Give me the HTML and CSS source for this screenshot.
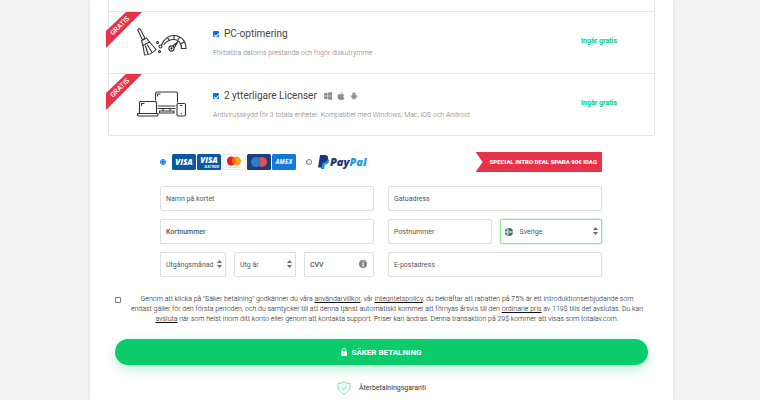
FILE: index.html
```html
<!DOCTYPE html>
<html lang="sv">
<head>
    <meta charset="UTF-8">
    <meta name="viewport" content="width=device-width, initial-scale=1.0">
    <title>Säker betalning</title>
    <link rel="stylesheet" href="styles.css">
</head>
<body>
    <main class="checkout">
        <div class="offers">
            <div class="offer">
                <svg class="ribbon" viewBox="0 0 36 36">
                    <polygon points="20,0 36,0 0,36 0,19" fill="#e63349"/>
                    <text x="14" y="16" transform="rotate(-45 14 14)" text-anchor="middle">GRATIS</text>
                </svg>
                <div class="offer-icon">
                    <svg width="50" height="28" viewBox="0 0 50 28" fill="none" stroke="#333" stroke-width="1.1" stroke-linecap="round" stroke-linejoin="round">
                        <path d="M1 2.5C.5 1 2.500 0 3.500 1.500L8 10.500 5.500 12Z"/>
                        <path d="M4.500 12.500L9.500 10 12.500 14 6 17.500Z"/>
                        <path d="M6 17.500L7.500 27Q14 27 19 21.500L12.500 14M8.500 18L11 26M10.500 17L15 24.500"/>
                        <circle cx="20.500" cy="14.500" r="1"/>
                        <circle cx="23.500" cy="18.500" r="1.500"/>
                        <circle cx="22.500" cy="23.500" r="1"/>
                        <path d="M24.500 17C28 9 33 7.500 37 7.500 44 7.500 49 13 49 20.500H44.500C44.500 15 41 11.500 37 11.500 33 11.500 30 12.500 27 16.500"/>
                        <path d="M30.500 9.500L32.500 12.500M37 7.500V11.500M42.500 9.500L40.500 12.500M47 14L43.500 16"/>
                        <circle cx="34.500" cy="20.500" r="2.600"/>
                        <circle cx="34.500" cy="20.500" r=".6"/>
                        <path d="M36 18L41 13.500 37.500 19.500"/>
                    </svg>
                </div>
                <div class="offer-text">
                    <label class="offer-title"><input type="checkbox" checked> PC-optimering</label>
                    <p>Förbättra datorns prestanda och frigör diskutrymme</p>
                </div>
                <strong class="offer-price">Ingår gratis</strong>
            </div>
            <div class="offer">
                <svg class="ribbon" viewBox="0 0 36 36">
                    <polygon points="20,0 36,0 0,36 0,19" fill="#e63349"/>
                    <text x="14" y="16" transform="rotate(-45 14 14)" text-anchor="middle">GRATIS</text>
                </svg>
                <div class="offer-icon">
                    <svg width="50" height="26" viewBox="0 0 50 26" fill="none" stroke="#333" stroke-width="1.1" stroke-linecap="round" stroke-linejoin="round">
                        <path d="M18.500 9V2.500Q18.500 1 20 1H39Q40.500 1 40.500 2.500V11M21 15H38M21 17.500H38M26 17.500V20M33 17.500V20M22.500 20H37V22H22.500ZM20.500 5V3H23"/>
                        <path d="M2.500 22V11.500Q2.500 10.500 3.500 10.500H18.500Q19.500 10.500 19.500 11.500V22M4.500 14.500V12.500H7"/>
                        <path d="M.600 22.500H21V24Q21 25 20 25H2Q.600 25 .600 24Z"/>
                        <rect x="40" y="12.500" width="8.500" height="12.500" rx="1.200"/>
                        <path d="M43.500 14.500H45M44.200 22.500V23"/>
                    </svg>
                </div>
                <div class="offer-text">
                    <div class="title-row">
                        <label class="offer-title"><input type="checkbox" checked> 2 ytterligare Licenser</label>
                        <span class="platforms">
                            <svg width="8" height="8" viewBox="0 0 16 16" fill="#8e8e8e"><path d="M0 2.300L6.500 1.400V7.600H0ZM7.300 1.300L16 0V7.600H7.300ZM0 8.400H6.500V14.600L0 13.700ZM7.300 8.400H16V16L7.300 14.700Z"/></svg>
                            <svg width="8" height="8" viewBox="0 0 16 16" fill="#8e8e8e"><path d="M11 0C11 2.200 9.500 3.800 7.700 3.800 7.600 1.800 9.200.2 11 0ZM11 4.200C12.500 4.200 13.700 5 14.400 6 11.500 7.700 12 11 15 12.200 14.200 14.200 12.800 16 11.400 16 10.200 16 9.800 15.300 8.300 15.300 6.800 15.300 6.400 16 5.200 16 3.300 16 1 12.500 1 9.200 1 6 3 4.200 5.200 4.200 6.600 4.200 7.500 5 8.300 5 9 5 10 4.200 11 4.200Z"/></svg>
                            <svg width="8" height="8" viewBox="0 0 16 16" fill="#8e8e8e"><path d="M4 5.500C4 3.800 5 2.600 6 2L5 .3 5.500 0 6.600 1.700Q8 1.200 9.400 1.700L10.500 0 11 .3 10 2C11 2.600 12 3.800 12 5.500ZM4 6.200H12V12.500H10.800V15.200Q10 16.500 9 15.200V12.500H7V15.200Q6 16.500 5.200 15.200V12.500H4ZM1.500 7Q2.400 5.500 3.300 7V11Q2.400 12.400 1.500 11ZM12.700 7Q13.600 5.500 14.500 7V11Q13.600 12.400 12.700 11Z"/></svg>
                        </span>
                    </div>
                    <p>Antivirusskydd för 3 totala enheter. Kompatibel med Windows, Mac, iOS och Android.</p>
                </div>
                <strong class="offer-price">Ingår gratis</strong>
            </div>
        </div>

        <form class="payment">
            <div class="methods">
                <label class="method">
                    <input type="radio" name="method" aria-label="Kort" checked>
                    <span class="cards">
                        <svg width="24" height="16" viewBox="0 0 24 16"><rect width="24" height="16" rx="1.500" fill="#0b57a0"/><text x="12" y="11" class="visa" text-anchor="middle">VISA</text></svg>
                        <svg width="24" height="16" viewBox="0 0 24 16"><rect width="24" height="16" rx="1.500" fill="#0b57a0"/><text x="12" y="9" class="visa" text-anchor="middle">VISA</text><text x="22" y="14" class="electron" text-anchor="end">ELECTRON</text></svg>
                        <svg width="24" height="16" viewBox="0 0 24 16"><rect x=".5" y=".5" width="23" height="15" rx="1.500" fill="#fff" stroke="#ececec"/><circle cx="9.300" cy="7" r="4.500" fill="#eb1b26"/><circle cx="14.500" cy="7" r="4.500" fill="#f99f1b"/><path d="M11.900 3.300A4.500 4.500 0 0 1 11.900 10.700 4.500 4.500 0 0 1 11.900 3.300Z" fill="#f26322"/><path d="M6.500 13.300H17.500" stroke="#999" stroke-width=".6" stroke-dasharray="1 .4"/></svg>
                        <svg width="24" height="16" viewBox="0 0 24 16"><rect width="24" height="16" rx="1.500" fill="#1d3f7c"/><circle cx="9" cy="8" r="5" fill="#2081d8"/><circle cx="15" cy="8" r="5" fill="#e2504f"/><path d="M12 4A5 5 0 0 1 12 12 5 5 0 0 1 12 4Z" fill="#68649c"/></svg>
                        <svg width="24" height="16" viewBox="0 0 24 16"><rect width="24" height="16" rx="1.500" fill="#1578d6"/><text x="12" y="10" class="amex" text-anchor="middle">AMEX</text></svg>
                    </span>
                </label>
                <label class="method">
                    <input type="radio" name="method" aria-label="PayPal">
                    <svg width="49" height="14" viewBox="0 0 49 14">
                        <path d="M4.500 3.500H9.500C11.500 4 11.300 6.500 10.300 8 9.500 9.300 8 9.500 6.800 9.500L6.200 14H3Z" fill="#1d9bd8"/>
                        <path d="M2 0H7C10 .1 10.500 2.200 9.800 4.200 9 6.700 7.200 7.500 4.600 7.500L3.700 12.500H0Z" fill="#1d3480"/>
                        <text x="12" y="11" class="paypal" fill="#1d3480">Pay<tspan fill="#1d9bd8">Pal</tspan></text>
                    </svg>
                </label>
                <span class="deal">SPECIAL INTRO DEAL SPARA 90€ IDAG</span>
            </div>

            <div class="fields">
                <input class="field" type="text" placeholder="Namn på kortet" aria-label="Namn på kortet">
                <input class="field" type="text" placeholder="Gatuadress" aria-label="Gatuadress">
                <input class="field strong" type="text" placeholder="Kortnummer" aria-label="Kortnummer">
                <div class="field-group address">
                    <input class="field" type="text" placeholder="Postnummer" aria-label="Postnummer">
                    <div class="select country">
                        <select class="field" aria-label="Land"><option>Sverige</option></select>
                        <svg class="flag" viewBox="0 0 8 8"><circle cx="4" cy="4" r="4" fill="#2b6fb5"/><path d="M2 .5H3.500V3.200H8V4.800H3.500V7.500H2V4.800H0V3.200H2Z" fill="#f6cf46"/></svg>
                        <svg class="arrows" viewBox="0 0 5 8"><path d="M0 3L2.500 0 5 3ZM0 5L2.500 8 5 5Z"/></svg>
                    </div>
                </div>
                <div class="field-group expiry">
                    <div class="select">
                        <select class="field" aria-label="Utgångsmånad"><option>Utgångsmånad</option></select>
                        <svg class="arrows" viewBox="0 0 5 8"><path d="M0 3L2.500 0 5 3ZM0 5L2.500 8 5 5Z"/></svg>
                    </div>
                    <div class="select">
                        <select class="field" aria-label="Utgångsår"><option>Utg år</option></select>
                        <svg class="arrows" viewBox="0 0 5 8"><path d="M0 3L2.500 0 5 3ZM0 5L2.500 8 5 5Z"/></svg>
                    </div>
                    <div class="select">
                        <input class="field strong" type="text" placeholder="CVV" aria-label="CVV">
                        <svg class="info" viewBox="0 0 8 8"><circle cx="4" cy="4" r="4" fill="#858585"/><path d="M4.500 1.300V2.300M3.300 3.500H4.300L3.800 6.300H4.700" fill="none" stroke="#fff"/></svg>
                    </div>
                </div>
                <input class="field" type="email" placeholder="E-postadress" aria-label="E-postadress">
            </div>

            <div class="terms">
                <input type="checkbox" id="accept">
                <label for="accept">Genom att klicka på "Säker betalning" godkänner du våra <a href="#">användarvillkor</a>, vår <a href="#">integritetspolicy</a>, du bekräftar att rabatten på 75% är ett introduktionserbjudande som<br>
                endast gäller för den första perioden, och du samtycker till att denna tjänst automatiskt kommer att förnyas årsvis till den <a href="#">ordinarie pris</a> av 119$ tills det avslutas. Du kan<br>
                <a href="#">avsluta</a> när som helst inom ditt konto eller genom att kontakta support. Priser kan ändras. Denna transaktion på 29$ kommer att visas som totalav.com.</label>
            </div>

            <button class="pay" type="submit">
                <svg width="6" height="8" viewBox="0 0 6 8"><rect y="3" width="6" height="5" rx=".8" fill="#fff"/><path d="M1.200 3.500V2.300A1.800 1.800 0 0 1 4.800 2.300V3.500" fill="none" stroke="#fff"/><path d="M3 5V6.300" stroke="#0ccb6b"/></svg>
                SÄKER BETALNING
            </button>
        </form>

        <div class="guarantee">
            <svg width="14" height="14" viewBox="0 0 14 14" fill="none" stroke="#5fdc9c" stroke-width=".8" stroke-linejoin="round">
                <path d="M7 .8Q9.500 2.600 13 2.500C13.400 8 11 11.500 7 13.200 3 11.500.600 8 1 2.500Q4.500 2.600 7 .8Z"/>
                <path d="M7 3Q9 4.100 11 4.200C11 7.500 9.500 9.700 7 11 4.500 9.700 3 7.500 3 4.200Q5 4.100 7 3Z" fill="#e8faf1" stroke="none"/>
                <path d="M4.800 7.200L6.300 8.600 9.300 5.600"/>
            </svg>
            Återbetalningsgaranti
        </div>
    </main>
</body>
</html>
```

FILE: styles.css
```css
* {
    box-sizing: border-box;
}
body {
    margin: 0;
    padding: 0 87px 0 90px;
    background: #f2f2f2;
    color: #444;
    font-family: Roboto, sans-serif;
    font-size: 7px;
}
input, select, button {
    font-family: inherit;
    margin: 0;
}
.checkout {
    min-height: 100vh;
    padding: 0 18px;
    background: #fff;
    box-shadow: 0 0 3px rgba(0, 0, 0, 0.1);
}

/* offers */
.offers {
    padding-top: 11px;
    border: 1px solid #e6e6e6;
    border-top: none;
    border-radius: 0 0 2px 2px;
}
.offer {
    position: relative;
    display: grid;
    grid-template-columns: 104px 1fr 73px;
    align-items: center;
    height: 62px;
    border-top: 1px solid #e6e6e6;
}
.ribbon {
    position: absolute;
    top: 0;
    left: -3px;
    width: 36px;
    height: 36px;
}
.ribbon text {
    fill: #fff;
    font-size: 7px;
    font-weight: 500;
}
.offer-icon {
    padding-left: 28px;
}
.offer-title {
    display: flex;
    align-items: center;
    gap: 5px;
    font-size: 10px;
    line-height: 12px;
    color: #444;
}
input[type="checkbox"], input[type="radio"] {
    flex: none;
    width: 6px;
    height: 6px;
}
.offer-title input[type="checkbox"] {
    position: relative;
    appearance: none;
    border-radius: 1px;
    background: #c9dcf5;
}
.offer-title input[type="checkbox"]:checked {
    background: #0b6fe8;
}
.offer-title input:checked::after {
    content: "";
    position: absolute;
    top: 1px;
    left: 2px;
    width: 2px;
    height: 4px;
    border: solid #fff;
    border-width: 0 1px 1px 0;
    transform: rotate(45deg);
}
.title-row, .platforms {
    display: flex;
    align-items: center;
    gap: 7px;
}
.platforms {
    gap: 5px;
}
.offer-text p {
    margin: 9px 0 0;
    font-size: 7px;
    line-height: 8px;
    font-weight: 300;
    color: #777;
}
.offer-price {
    padding-bottom: 4px;
    font-weight: 700;
    color: #0ccb6b;
}

/* payment */
.methods {
    display: flex;
    align-items: center;
    gap: 10px;
    padding: 16px 53px 14px 52px;
}
.method {
    display: flex;
    align-items: center;
    gap: 6px;
}
.cards {
    display: flex;
    gap: 1px;
}
.cards svg {
    display: block;
}
.visa {
    fill: #fff;
    font: italic 800 8px "Open Sans", sans-serif;
}
.electron {
    fill: #fff;
    font: italic 700 3px "Open Sans", sans-serif;
}
.amex {
    fill: #d4eaff;
    font: italic 800 6px "Open Sans", sans-serif;
}
.paypal {
    font: italic 800 11px "Open Sans", sans-serif;
}
.deal {
    margin-left: auto;
    padding: 6px 5px 6px 14px;
    background: #e63349;
    clip-path: polygon(0 0, 100% 0, 100% 100%, 0 100%, 7px 50%);
    color: #fff;
    font-size: 6px;
    line-height: 8px;
    font-weight: 900;
}
.fields {
    display: grid;
    grid-template-columns: 1fr 1fr;
    gap: 8px 14px;
    padding: 0 53px 0 52px;
}
.field-group {
    display: grid;
    gap: 8px;
}
.address {
    grid-template-columns: 105fr 102fr;
}
.expiry {
    grid-template-columns: 66fr 62fr 70fr;
}
.field {
    width: 100%;
    min-width: 0;
    height: 25px;
    padding: 0 5px;
    border: 1px solid #dfdfdf;
    border-radius: 2px;
    background: #fff;
    color: #4f5960;
    font-size: 7px;
    appearance: none;
}
.field::placeholder {
    color: #4f5960;
}
.strong::placeholder {
    font-weight: 500;
}
.select {
    position: relative;
    min-width: 0;
}
.arrows {
    position: absolute;
    top: 8px;
    right: 4px;
    width: 5px;
    height: 8px;
    fill: #6b6b6b;
}
.flag {
    position: absolute;
    top: 9px;
    left: 5px;
    width: 8px;
    height: 8px;
}
.country .field {
    padding-left: 18px;
    border-color: #8fe59a;
    box-shadow: 0 0 2px #8fe59a;
}
.info {
    position: absolute;
    top: 8px;
    right: 7px;
    width: 8px;
    height: 8px;
}

/* terms and button */
.terms {
    display: flex;
    align-items: flex-start;
    gap: 5px;
    padding: 17px 7px 14px;
    line-height: 10px;
    font-weight: 300;
    color: #111;
    text-align: center;
}
.terms input[type="checkbox"] {
    appearance: none;
    margin-top: 3px;
    border: 1px solid #777;
    border-radius: 1px;
}
.terms input[type="checkbox"]:checked {
    background: #0b6fe8;
}
.terms label {
    flex: 1;
    white-space: nowrap;
}
.terms a {
    color: inherit;
}
.pay {
    display: flex;
    align-items: center;
    justify-content: center;
    gap: 4px;
    width: calc(100% - 14px);
    height: 26px;
    margin: 1px 7px 0;
    border: none;
    border-radius: 13px;
    background: #0ccb6b;
    box-shadow: 0 4px 12px rgba(12, 203, 107, 0.3);
    color: #fff;
    font-size: 8px;
    font-weight: 700;
    cursor: pointer;
}
.guarantee {
    display: flex;
    align-items: center;
    justify-content: center;
    gap: 8px;
    padding-top: 16px;
    color: #333;
}
```
